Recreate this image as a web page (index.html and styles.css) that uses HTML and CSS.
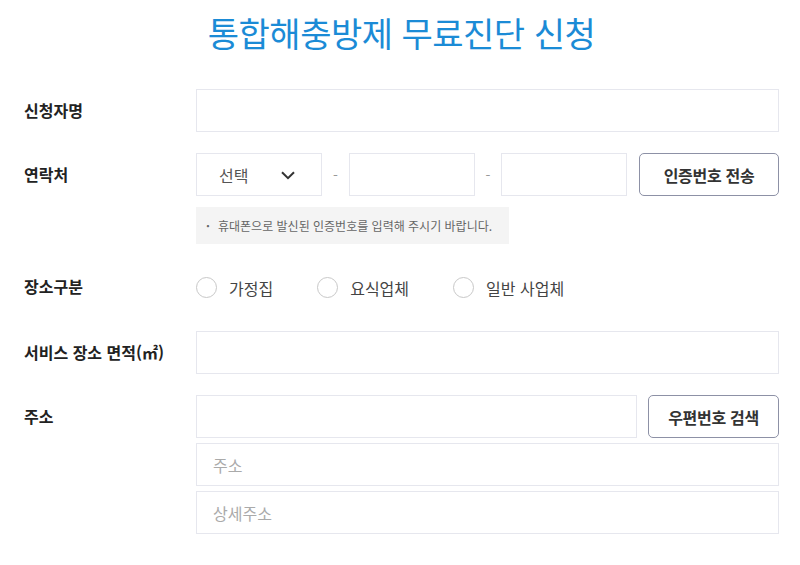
FILE: index.html
```html
<!doctype html>
<html lang="ko">
<head>
    <meta charset="UTF-8">
    <meta name="viewport" content="width=device-width, initial-scale=1">
    <title>통합해충방제 무료진단 신청</title>
    <link rel="stylesheet" href="styles.css">
</head>
<body>
<main class="apply">
    <h1 class="apply-title">통합해충방제 무료진단 신청</h1>

    <form class="apply-form">
        <div class="row">
            <label class="row-label">신청자명</label>
            <div class="row-field">
                <input class="box" type="text">
            </div>
        </div>

        <div class="row">
            <label class="row-label">연락처</label>
            <div class="row-field">
                <div class="phone">
                    <div class="box select">
                        <span>선택</span>
                        <svg class="chevron" width="14" height="9" viewBox="0 0 14 9">
                            <path d="M1 1.2 L7 7.2 L13 1.2" fill="none" stroke="#333" stroke-width="2"/>
                        </svg>
                    </div>
                    <span class="dash">-</span>
                    <input class="box" type="text">
                    <span class="dash">-</span>
                    <input class="box" type="text">
                    <button type="button" class="btn btn-auth">인증번호 전송</button>
                </div>
                <p class="note"><span class="bullet">·</span>휴대폰으로 발신된 인증번호를 입력해 주시기 바랍니다.</p>
            </div>
        </div>

        <div class="row row-radio">
            <label class="row-label">장소구분</label>
            <div class="row-field radios">
                <label class="radio"><span class="dot"></span>가정집</label>
                <label class="radio"><span class="dot"></span>요식업체</label>
                <label class="radio"><span class="dot"></span>일반 사업체</label>
            </div>
        </div>

        <div class="row">
            <label class="row-label">서비스 장소 면적(㎡)</label>
            <div class="row-field">
                <input class="box" type="text">
            </div>
        </div>

        <div class="row">
            <label class="row-label">주소</label>
            <div class="row-field address">
                <div class="zip">
                    <input class="box" type="text">
                    <button type="button" class="btn btn-zip">우편번호 검색</button>
                </div>
                <input class="box" type="text" placeholder="주소">
                <input class="box" type="text" placeholder="상세주소">
            </div>
        </div>
    </form>
</main>
</body>
</html>
```

FILE: styles.css
```css
*{
    box-sizing: border-box;
}
body{
    margin: 0;
    background: #fff;
    font-family: "Noto Sans CJK KR", "Noto Sans", sans-serif;
    color: #333;
}
.apply{
    width: 800px;
    padding: 0 21px 0 24px;
}
.apply-title{
    margin: 0;
    padding-top: 8px;
    height: 89px;
    text-align: center;
    font-size: 34px;
    font-weight: 400;
    line-height: 50px;
    letter-spacing: -0.5px;
    color: #1b8bd6;
}

.row{
    display: flex;
    margin-bottom: 21px;
}
.row-label{
    width: 172px;
    flex: none;
    padding-top: 10px;
    font-size: 16px;
    font-weight: 700;
    line-height: 22px;
    color: #222;
}
.row-field{
    flex: 1;
}

.box{
    display: block;
    width: 100%;
    height: 43px;
    border: 1px solid #e6e7ee;
    border-radius: 0;
    background: #fff;
    padding: 0 16px;
    font-family: inherit;
    font-size: 16px;
    color: #333;
    outline: none;
}
.box::placeholder{
    color: #aaa;
}

.phone{
    display: flex;
    align-items: center;
}
.phone .box{
    width: 126px;
    flex: none;
}
.select{
    display: flex;
    align-items: center;
    justify-content: space-between;
    padding: 0 26px 0 22px;
    color: #555;
}
.chevron{
    margin-top: 2px;
}
.dash{
    width: 27px;
    text-align: center;
    color: #999;
    font-size: 14px;
}
.phone .dash:nth-of-type(2){
    width: 26px;
}

.btn{
    height: 43px;
    border: 1px solid #8d91a6;
    border-radius: 5px;
    background: #fff;
    font-family: inherit;
    font-size: 16px;
    font-weight: 700;
    color: #333;
    letter-spacing: -0.3px;
    padding: 0;
}
.btn-auth{
    width: 140px;
    margin-left: 12px;
}

.note{
    display: inline-block;
    margin: 11px 0 0;
    height: 37px;
    padding: 0 17px 0 10px;
    background: #f4f4f4;
    font-size: 12px;
    line-height: 37px;
    color: #666;
}
.bullet{
    display: inline-block;
    width: 12px;
    font-weight: 700;
}

.row-radio{
    margin-bottom: 21px;
}
.radios{
    display: flex;
    align-items: center;
    height: 45px;
}
.radio{
    display: flex;
    align-items: center;
    font-size: 16px;
    color: #444;
    margin-right: 44px;
}
.dot{
    width: 21px;
    height: 21px;
    border: 1px solid #c8c8c8;
    border-radius: 50%;
    margin-right: 12px;
}

.address .box{
    margin-bottom: 5px;
}
.zip{
    display: flex;
    gap: 11px;
}
.zip .box{
    flex: 1;
}
.btn-zip{
    width: 131px;
    flex: none;
}
```
